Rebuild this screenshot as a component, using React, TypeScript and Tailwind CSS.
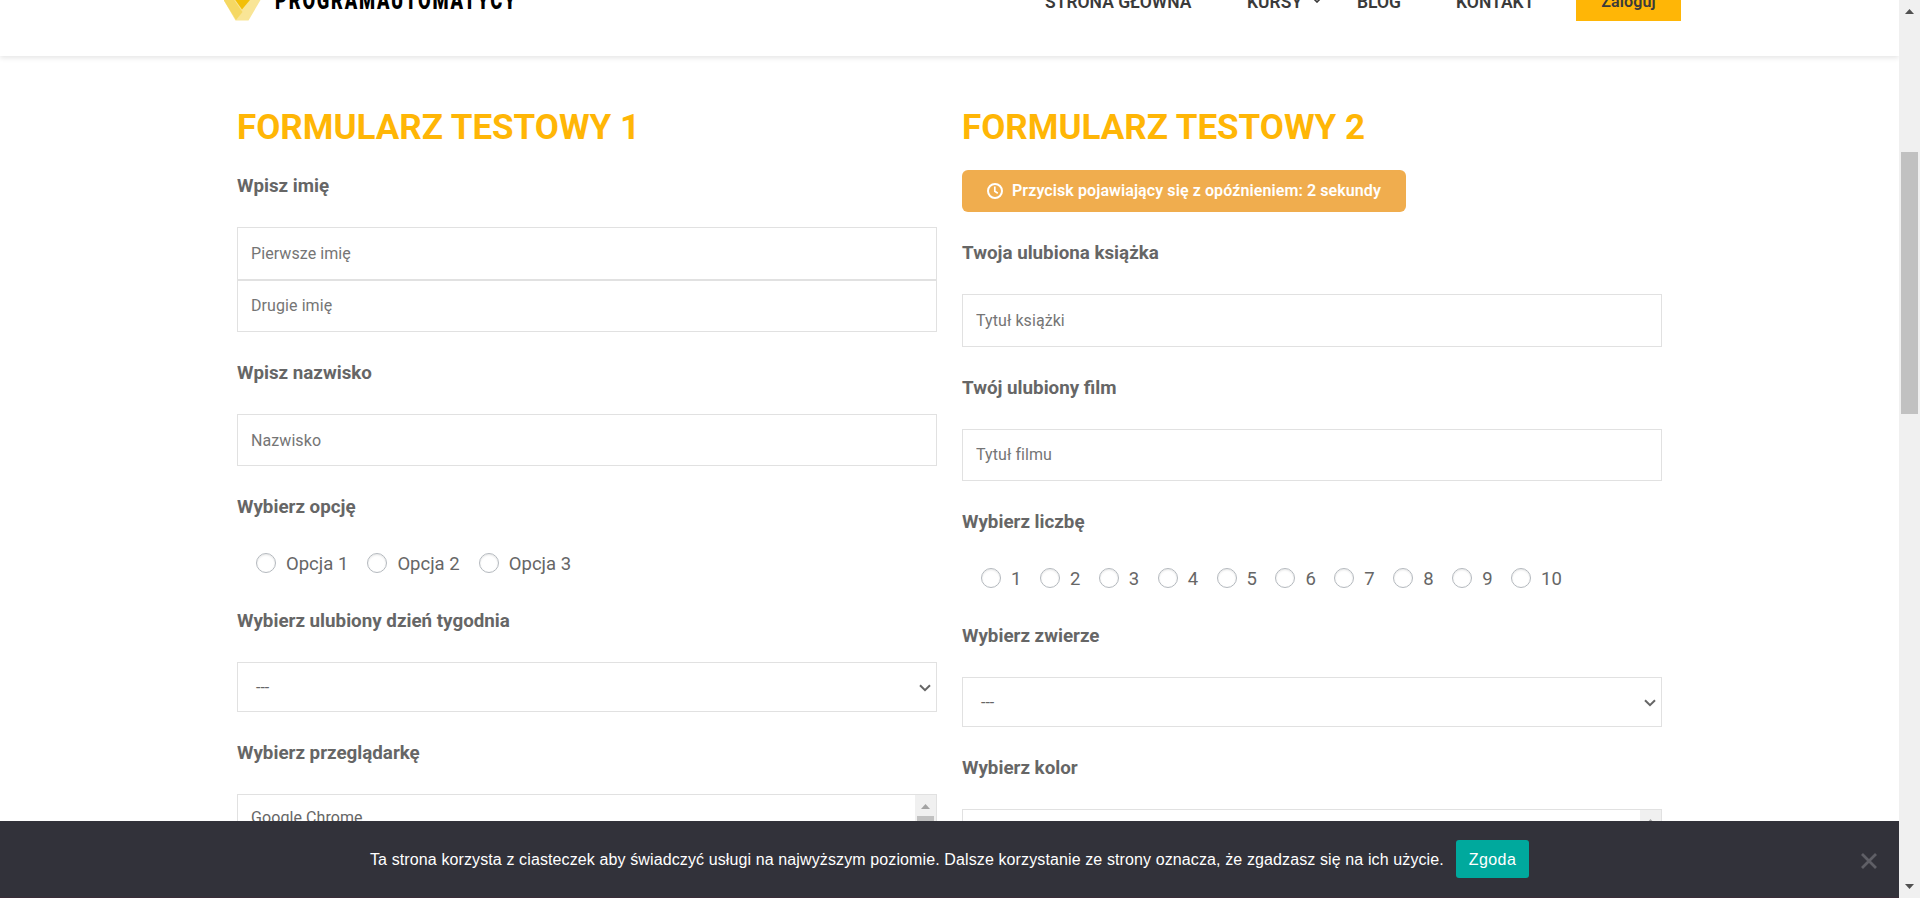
import React from "react";

const navItem = "whitespace-nowrap text-[17.500px] font-semibold leading-[24px] text-[#3a3a3a]";

function Logo() {
  return (
    <div className="flex h-[20px] w-[300px] shrink-0 items-end">
      <svg width="40" height="21" viewBox="0 0 40 21" className="mb-[-1px] shrink-0">
        <path d="M0 -6 H40 L24.500 20.500 H11.500 L-4 -6 Z" fill="#f9e596" />
        <path d="M-4 -6 H6 L18.500 12 L12 20 Z" fill="#f5d863" />
        <path d="M7 -6 H31 L18 9.500 Z" fill="#f2bf09" />
      </svg>
      <div className="relative h-[20px] w-[250px]">
        <span className="absolute bottom-[7px] left-[11px] origin-left scale-x-[0.733] whitespace-nowrap text-[25px] font-black leading-[24px] tracking-[2.400px] text-black">
          PROGRAMAUTOMATYCY
        </span>
      </div>
    </div>
  );
}

function Header() {
  return (
    <header className="relative z-10 h-[56px] w-full shrink-0 bg-white pl-[224px] shadow-[0_2px_5px_rgba(0,0,0,0.1)]">
      <div className="flex items-start">
        <Logo />
        <nav className="ml-[521px] mt-[-10px] flex">
          <span className={`${navItem} w-[202px]`}>STRONA GŁÓWNA</span>
          <span className={`${navItem} flex w-[110px]`}>
            KURSY
            <svg width="8" height="5" viewBox="0 0 8 5" className="ml-[11px] mt-[8px]">
              <path d="M0.500 0.500 L4 4 L7.500 0.500" fill="none" stroke="#3a3a3a" strokeWidth="1.600" />
            </svg>
          </span>
          <span className={`${navItem} w-[99px]`}>BLOG</span>
          <span className={`${navItem} w-[120px]`}>KONTAKT</span>
        </nav>
        <button className="mt-[-21px] h-[42px] w-[105px] bg-[#ffb606] pt-[3px] text-[16px] font-semibold leading-[39px] tracking-[0.100px] text-[#3a3a3a]">
          Zaloguj
        </button>
      </div>
    </header>
  );
}

function Field({ label, children }: { label: string; children: React.ReactNode }) {
  return (
    <section className="mb-[26px]">
      <h3 className="mb-7 h-7 pt-px text-[18.780px] font-bold leading-7 text-[#666]">{label}</h3>
      {children}
    </section>
  );
}

function Input({ placeholder, size }: { placeholder: string; size: string }) {
  return (
    <input
      placeholder={placeholder}
      className={`${size} block w-full border border-[#e1e1e1] bg-white px-[13px] text-[16px] tracking-[0.080px] outline-none placeholder:text-[#757575]`}
    />
  );
}

function Radios({ options, pitch }: { options: string[]; pitch: string }) {
  return (
    <div className="mb-[28px] flex h-[30px] items-center pl-[19px]">
      {options.map((o) => (
        <label key={o} className={`${pitch} flex shrink-0 items-center gap-[10px] text-[18.500px] leading-[30px] text-[#666]`}>
          <span className="h-5 w-5 shrink-0 rounded-full border border-[#b4b9be] bg-white shadow-[inset_0_1px_2px_rgba(0,0,0,0.1)]" />
          <span className="whitespace-nowrap pt-px">{o}</span>
        </label>
      ))}
    </div>
  );
}

function Select() {
  return (
    <div className="flex h-[50px] items-center justify-between border border-[#e1e1e1] bg-white pl-[18px] pr-[5px] pt-[2px] text-[16px] text-[#666]">
      <span>---</span>
      <svg width="12" height="8" viewBox="0 0 12 8">
        <path d="M1 1.200 L6 6.200 L11 1.200" fill="none" stroke="#666" strokeWidth="2" />
      </svg>
    </div>
  );
}

function ListBox({ items }: { items: string[] }) {
  return (
    <div className="flex h-[100px] justify-between border border-[#e1e1e1] bg-white pl-[13px] text-[16px] text-[#666]">
      <div className="pt-[12px] tracking-[0.080px]">
        {items.map((i) => (
          <div key={i} className="leading-[22px]">{i}</div>
        ))}
      </div>
      <div className="flex w-[21px] flex-col items-center bg-[#f0f0f0]">
        <svg width="9" height="5" viewBox="0 0 9 5" className="mt-[9px]">
          <path d="M0 5 L4.500 0 L9 5 Z" fill="#a3a3a3" />
        </svg>
        <div className="mt-[7px] h-[50px] w-[17px] bg-[#c1c1c1]" />
      </div>
    </div>
  );
}

const title = "h-[40px] whitespace-nowrap pt-px text-[35px] font-bold leading-[40px] text-[#ffb606]";

function FormOne() {
  return (
    <div className="w-[700px]">
      <h2 className={`${title} mb-[24px]`}>FORMULARZ TESTOWY 1</h2>
      <Field label="Wpisz imię">
        <Input placeholder="Pierwsze imię" size="h-[53px]" />
        <Input placeholder="Drugie imię" size="h-[52px] pb-[2px]" />
      </Field>
      <Field label="Wpisz nazwisko">
        <Input placeholder="Nazwisko" size="h-[52px]" />
      </Field>
      <Field label="Wybierz opcję">
        <Radios options={["Opcja 1", "Opcja 2", "Opcja 3"]} pitch="w-[111.400px]" />
      </Field>
      <Field label="Wybierz ulubiony dzień tygodnia">
        <Select />
      </Field>
      <Field label="Wybierz przeglądarkę">
        <ListBox items={["Google Chrome"]} />
      </Field>
    </div>
  );
}

function FormTwo() {
  return (
    <div className="w-[700px]">
      <h2 className={`${title} mb-[23px]`}>FORMULARZ TESTOWY 2</h2>
      <button className="mb-[26px] flex h-[42px] w-[444px] items-center rounded-[6px] bg-[#f0ad4e] pl-[25px] text-[16px] font-semibold tracking-[0.095px] text-white">
        <svg width="16" height="16" viewBox="0 0 16 16" className="mr-[9px] shrink-0">
          <circle cx="8" cy="8" r="7" fill="none" stroke="#fff" strokeWidth="2" />
          <path d="M7.800 3.500 V8.300 L10.800 10.300" fill="none" stroke="#fff" strokeWidth="1.700" />
        </svg>
        <span className="whitespace-nowrap">Przycisk pojawiający się z opóźnieniem: 2 sekundy</span>
      </button>
      <Field label="Twoja ulubiona książka">
        <Input placeholder="Tytuł książki" size="h-[53px]" />
      </Field>
      <Field label="Twój ulubiony film">
        <Input placeholder="Tytuł filmu" size="h-[52px] pb-[2px]" />
      </Field>
      <Field label="Wybierz liczbę">
        <Radios options={["1", "2", "3", "4", "5", "6", "7", "8", "9", "10"]} pitch="w-[58.900px]" />
      </Field>
      <Field label="Wybierz zwierze">
        <Select />
      </Field>
      <Field label="Wybierz kolor">
        <ListBox items={[]} />
      </Field>
    </div>
  );
}

function CookieBar() {
  return (
    <div className="absolute inset-x-0 bottom-0 z-20 flex h-[77px] items-center border-b border-[#3a2d38] bg-[#32323a] pl-[370px] font-['Liberation_Sans',Arial,sans-serif] text-[16px] text-white">
      <span className="w-[1086px] shrink-0 whitespace-nowrap pt-px tracking-[0.114px]">
        Ta strona korzysta z ciasteczek aby świadczyć usługi na najwyższym poziomie. Dalsze korzystanie ze strony oznacza, że zgadzasz się na ich użycie.
      </span>
      <button className="h-[38px] w-[73px] shrink-0 rounded-[3px] bg-[#00a99d] pt-[2px] tracking-[0.450px]">Zgoda</button>
      <svg width="16" height="16" viewBox="0 0 16 16" className="ml-[332px] mt-[3px] shrink-0">
        <path d="M1 1 L15 15 M15 1 L1 15" stroke="#5f5f66" strokeWidth="2.800" />
      </svg>
    </div>
  );
}

function PageScrollbar() {
  return (
    <div className="flex h-full w-[21px] shrink-0 flex-col items-center bg-[#f0f0f0]">
      <svg width="9" height="5" viewBox="0 0 9 5" className="mt-[9px]">
        <path d="M0 5 L4.500 0 L9 5 Z" fill="#505050" />
      </svg>
      <div className="mt-[138px] h-[262px] w-[17px] bg-[#c1c1c1]" />
      <svg width="9" height="5" viewBox="0 0 9 5" className="mb-[9px] mt-auto">
        <path d="M0 0 L4.500 5 L9 0 Z" fill="#505050" />
      </svg>
    </div>
  );
}

export default function App() {
  return (
    <div className="flex h-[898px] w-[1920px] overflow-hidden bg-white font-['Roboto','Noto_Sans',sans-serif]">
      <div className="relative flex h-full w-[1899px] flex-col overflow-hidden">
        <Header />
        <main className="flex gap-[25px] pl-[237px] pt-[51px]">
          <FormOne />
          <FormTwo />
        </main>
        <CookieBar />
      </div>
      <PageScrollbar />
    </div>
  );
}
